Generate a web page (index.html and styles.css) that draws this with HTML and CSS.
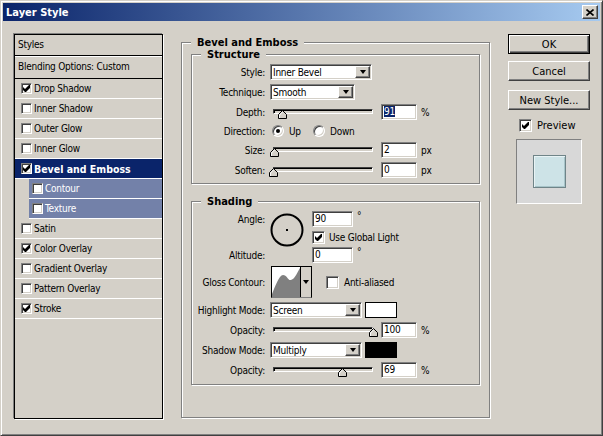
FILE: index.html
```html
<!DOCTYPE html>
<html lang="en">
<head>
  <meta charset="UTF-8" />
  <title>Layer Style</title>
  <link rel="stylesheet" href="styles.css">
</head>
<body>
  <div class="window">
    <div class="titlebar">
      <span class="title">Layer Style</span>
      <span class="close-btn"><svg width="8" height="7" viewBox="0 0 8 7"><path d="M0.5 0.5L7.5 6.5M7.5 0.5L0.5 6.5" stroke="#000" stroke-width="1.6"/></svg></span>
    </div>

    <div class="dialog">
      <!-- left: list of effects -->
      <div class="style-list">
        <div class="list-head">Styles</div>
        <div class="list-blend">Blending Options: Custom</div>
        <div class="list-item"><span class="check"><svg width="7" height="7" viewBox="0 0 7 7"><path d="M0 2L2 4L6 0H7V3L3 7H2L0 5Z"/></svg></span>Drop Shadow</div>
        <div class="list-item"><span class="check"></span>Inner Shadow</div>
        <div class="list-item"><span class="check"></span>Outer Glow</div>
        <div class="list-item"><span class="check"></span>Inner Glow</div>
        <div class="list-item selected"><span class="check"><svg width="7" height="7" viewBox="0 0 7 7"><path d="M0 2L2 4L6 0H7V3L3 7H2L0 5Z"/></svg></span>Bevel and Emboss</div>
        <div class="list-item sub"><span class="check"></span>Contour</div>
        <div class="list-item sub"><span class="check"></span>Texture</div>
        <div class="list-item"><span class="check"></span>Satin</div>
        <div class="list-item"><span class="check"><svg width="7" height="7" viewBox="0 0 7 7"><path d="M0 2L2 4L6 0H7V3L3 7H2L0 5Z"/></svg></span>Color Overlay</div>
        <div class="list-item"><span class="check"></span>Gradient Overlay</div>
        <div class="list-item"><span class="check"></span>Pattern Overlay</div>
        <div class="list-item"><span class="check"><svg width="7" height="7" viewBox="0 0 7 7"><path d="M0 2L2 4L6 0H7V3L3 7H2L0 5Z"/></svg></span>Stroke</div>
      </div>

      <!-- middle: bevel and emboss settings -->
      <fieldset class="group main-group">
        <legend class="outer-legend">Bevel and Emboss</legend>
        <div class="group-inner">

          <fieldset class="group structure">
            <legend>Structure</legend>
            <div class="rows">
              <div class="row">
                <span class="lbl">Style:</span>
                <div class="select style-select">Inner Bevel<span class="drop"><span class="arrow"></span></span></div>
              </div>
              <div class="row">
                <span class="lbl">Technique:</span>
                <div class="select technique-select">Smooth<span class="drop"><span class="arrow"></span></span></div>
              </div>
              <div class="row">
                <span class="lbl">Depth:</span>
                <div class="slider"><div class="track"></div><span class="thumb" style="left: 9%"><svg width="9" height="9" viewBox="0 0 9 9"><path d="M4.5 0.5L8.5 4.5V8.5H0.5V4.5Z" fill="#d4d0c8" stroke="#000"/><path d="M1.5 8V5L4.5 2" fill="none" stroke="#fff"/></svg></span></div>
                <div class="field"><span class="sel-text">91</span></div>
                <span class="unit">%</span>
              </div>
              <div class="row direction">
                <span class="lbl">Direction:</span>
                <span class="opt up"><span class="radio on"></span>Up</span>
                <span class="opt"><span class="radio"></span>Down</span>
              </div>
              <div class="row">
                <span class="lbl">Size:</span>
                <div class="slider"><div class="track"></div><span class="thumb" style="left: 1%"><svg width="9" height="9" viewBox="0 0 9 9"><path d="M4.5 0.5L8.5 4.5V8.5H0.5V4.5Z" fill="#d4d0c8" stroke="#000"/><path d="M1.5 8V5L4.5 2" fill="none" stroke="#fff"/></svg></span></div>
                <div class="field">2</div>
                <span class="unit">px</span>
              </div>
              <div class="row">
                <span class="lbl">Soften:</span>
                <div class="slider"><div class="track"></div><span class="thumb" style="left: 0%"><svg width="9" height="9" viewBox="0 0 9 9"><path d="M4.5 0.5L8.5 4.5V8.5H0.5V4.5Z" fill="#d4d0c8" stroke="#000"/><path d="M1.5 8V5L4.5 2" fill="none" stroke="#fff"/></svg></span></div>
                <div class="field">0</div>
                <span class="unit">px</span>
              </div>
            </div>
          </fieldset>

          <fieldset class="group shading">
            <legend>Shading</legend>
            <div class="rows">
              <div class="angle-block">
                <span class="lbl angle-lbl">Angle:</span>
                <svg class="dial" width="34" height="34" viewBox="0 0 34 34"><circle cx="17" cy="17" r="15.5" fill="none" stroke="#000" stroke-width="2"/><rect x="16" y="16" width="2" height="2"/></svg>
                <span class="angle-val"><span class="field wide">90</span><span class="deg">°</span></span>
                <span class="global-light"><span class="check big"><svg width="7" height="7" viewBox="0 0 7 7"><path d="M0 2L2 4L6 0H7V3L3 7H2L0 5Z"/></svg></span>Use Global Light</span>
                <span class="lbl altitude-lbl">Altitude:</span>
                <span class="altitude-val"><span class="field wide">0</span><span class="deg">°</span></span>
              </div>
              <div class="row contour-row">
                <span class="lbl">Gloss Contour:</span>
                <div class="contour">
                  <svg class="curve" width="28" height="30" viewBox="0 0 28 30"><path d="M0 30V27C3 20 7 8 11 8C15 8 16 14 19 13C23 12 26 4 28 1V30Z" fill="#808080"/></svg>
                  <span class="contour-drop"><span class="arrow"></span></span>
                </div>
                <span class="anti"><span class="check big"></span>Anti-aliased</span>
              </div>
              <div class="row">
                <span class="lbl">Highlight Mode:</span>
                <div class="select mode-select">Screen<span class="drop"><span class="arrow"></span></span></div>
                <span class="color-chip white"></span>
              </div>
              <div class="row">
                <span class="lbl">Opacity:</span>
                <div class="slider"><div class="track"></div><span class="thumb" style="left: 100%"><svg width="9" height="9" viewBox="0 0 9 9"><path d="M4.5 0.5L8.5 4.5V8.5H0.5V4.5Z" fill="#d4d0c8" stroke="#000"/><path d="M1.5 8V5L4.5 2" fill="none" stroke="#fff"/></svg></span></div>
                <div class="field">100</div>
                <span class="unit">%</span>
              </div>
              <div class="row">
                <span class="lbl">Shadow Mode:</span>
                <div class="select mode-select">Multiply<span class="drop"><span class="arrow"></span></span></div>
                <span class="color-chip black"></span>
              </div>
              <div class="row">
                <span class="lbl">Opacity:</span>
                <div class="slider"><div class="track"></div><span class="thumb" style="left: 69%"><svg width="9" height="9" viewBox="0 0 9 9"><path d="M4.5 0.5L8.5 4.5V8.5H0.5V4.5Z" fill="#d4d0c8" stroke="#000"/><path d="M1.5 8V5L4.5 2" fill="none" stroke="#fff"/></svg></span></div>
                <div class="field">69</div>
                <span class="unit">%</span>
              </div>
            </div>
          </fieldset>

        </div>
      </fieldset>

      <!-- right: buttons and preview -->
      <div class="side">
        <button class="btn default">OK</button>
        <button class="btn cancel">Cancel</button>
        <button class="btn new-style">New Style...</button>
        <label class="preview-check"><span class="check big"><svg width="7" height="7" viewBox="0 0 7 7"><path d="M0 2L2 4L6 0H7V3L3 7H2L0 5Z"/></svg></span>Preview</label>
        <div class="preview"><div class="preview-swatch"></div></div>
      </div>
    </div>
  </div>
</body>
</html>
```

FILE: styles.css
```css
* { box-sizing: border-box; }
body {
  margin: 0;
  background: #d4d0c8;
  font-family: "DejaVu Sans Condensed", "DejaVu Sans", sans-serif;
  font-size: 10px;
  letter-spacing: -0.25px;
  color: #000;
}

.window {
  width: 603px;
  height: 436px;
  padding: 2px;
  background: #d4d0c8;
  border: 1px solid;
  border-color: #d4d0c8 #404040 #404040 #d4d0c8;
  box-shadow: inset 1px 1px #fff, inset -1px -1px #808080;
}

.titlebar {
  height: 18px;
  display: flex;
  align-items: center;
  justify-content: space-between;
  padding: 0 2px 0 3px;
  background: linear-gradient(to right, #0a246a, #a6caf0);
}
.title { color: #fff; font-weight: bold; font-size: 11px; letter-spacing: 0; }
.close-btn {
  width: 16px;
  height: 14px;
  display: flex;
  align-items: center;
  justify-content: center;
  background: #d4d0c8;
  border: 1px solid;
  border-color: #fff #404040 #404040 #fff;
  box-shadow: inset -1px -1px #808080;
}

.dialog {
  display: flex;
  align-items: flex-start;
  padding: 13px 0 0 11px;
}

/* effects list */
.style-list {
  width: 149px;
  height: 385px;
  border: 1px solid #000;
  box-shadow: -1px -1px #808080, 1px 1px #fff;
}
.list-head {
  height: 21px;
  line-height: 20px;
  padding-left: 3px;
  border-bottom: 1px solid #000;
}
.list-blend {
  height: 23px;
  line-height: 20px;
  padding-left: 3px;
  border-top: 1px solid #fff;
  border-bottom: 1px solid #000;
}
.list-item {
  height: 20px;
  display: flex;
  align-items: center;
  padding-left: 6px;
  border-bottom: 1px solid #fff;
}
.list-item .check { margin-right: 2px; }
.list-item.selected {
  background: #0a246a;
  color: #fff;
  font-weight: bold;
  font-size: 10.5px;
  letter-spacing: 0;
}
.list-item.sub {
  margin-left: 14px;
  padding-left: 3px;
  background: #7381a9;
  color: #fff;
}

.check {
  width: 11px;
  height: 11px;
  flex: none;
  display: inline-flex;
  align-items: center;
  justify-content: center;
  background: #fff;
  border: 1px solid;
  border-color: #808080 #fff #fff #808080;
  box-shadow: inset 1px 1px #404040, inset -1px -1px #d4d0c8;
}
.check.big { width: 13px; height: 13px; }
.check svg { fill: #000; }

/* group boxes */
.group {
  margin: 0;
  padding: 0;
  min-width: 0;
  border: 1px solid #808080;
  box-shadow: inset 1px 1px #fff, 1px 1px #fff;
}
.group legend {
  margin-left: 9px;
  padding: 0 6px;
  line-height: 13px;
  font-size: 11px;
  font-weight: bold;
  letter-spacing: 0;
  background: #d4d0c8;
}
.group legend.outer-legend { line-height: 11px; }

.main-group {
  width: 309px;
  height: 381px;
  margin: 3px 0 0 18px;
}
.group-inner { padding: 0 9px; }
.structure { height: 136px; }
.shading { height: 190px; margin-top: 11px; }

.rows { padding-top: 3px; }
.row {
  height: 16px;
  display: flex;
  align-items: center;
  margin-bottom: 4px;
}
.lbl {
  width: 78px;
  flex: none;
  display: flex;
  justify-content: flex-end;
  padding-right: 5px;
  white-space: nowrap;
}

.select {
  height: 16px;
  display: flex;
  align-items: center;
  padding: 0 1px 0 2px;
  background: #fff;
  border: 1px solid;
  border-color: #808080 #fff #fff #808080;
  box-shadow: inset 1px 1px #404040, inset -1px -1px #d4d0c8;
}
.style-select { width: 102px; }
.technique-select { width: 85px; }
.mode-select { width: 92px; }
.drop {
  margin-left: auto;
  width: 15px;
  height: 12px;
  display: flex;
  align-items: center;
  justify-content: center;
  background: #d4d0c8;
  border: 1px solid;
  border-color: #fff #404040 #404040 #fff;
  box-shadow: inset -1px -1px #808080;
}
.arrow {
  width: 0;
  height: 0;
  border-left: 3.5px solid transparent;
  border-right: 3.5px solid transparent;
  border-top: 4px solid #000;
}

.slider {
  position: relative;
  width: 100px;
  height: 16px;
  margin-left: 3px;
}
.track {
  margin-top: 5px;
  height: 5px;
  background: #d4d0c8;
  border: 1px solid;
  border-color: #404040 #fff #fff #404040;
  box-shadow: inset 1px 1px #000;
}
.thumb {
  position: absolute;
  top: 6px;
  width: 9px;
  height: 9px;
  margin-left: -4px;
  display: flex;
}

.field {
  width: 36px;
  height: 16px;
  margin-left: 8px;
  padding-left: 2px;
  line-height: 14px;
  background: #fff;
  border: 1px solid;
  border-color: #808080 #fff #fff #808080;
  box-shadow: inset 1px 1px #404040, inset -1px -1px #d4d0c8;
}
.field.wide { width: 41px; margin-left: 0; display: block; }
.sel-text { background: #0a246a; color: #fff; }
.unit { margin-left: 4px; }

.direction { height: 14px; margin-bottom: 4px; }
.opt { display: flex; align-items: center; }
.opt.up { width: 41px; margin-left: 2px; }
.radio {
  width: 12px;
  height: 12px;
  margin-right: 5px;
  border-radius: 50%;
  display: flex;
  align-items: center;
  justify-content: center;
  background: #fff;
  border: 1px solid;
  border-color: #808080 #fff #fff #808080;
  box-shadow: inset 1px 1px #404040, inset -1px -1px #d4d0c8;
}
.radio.on::after {
  content: "";
  width: 4px;
  height: 4px;
  border-radius: 50%;
  background: #000;
}

/* angle and altitude */
.angle-block {
  display: grid;
  grid-template-columns: 78px 42px auto;
  grid-template-rows: 16px 20px 16px;
  align-items: center;
}
.angle-lbl { grid-row: 1; grid-column: 1; }
.altitude-lbl { grid-row: 3; grid-column: 1; }
.dial { grid-row: 1 / 4; grid-column: 2; align-self: start; margin-top: 2px; }
.angle-val, .altitude-val { display: flex; align-items: flex-start; grid-column: 3; }
.angle-val { grid-row: 1; }
.altitude-val { grid-row: 3; }
.deg { margin-left: 4px; line-height: 9px; }
.global-light { grid-row: 2; grid-column: 3; display: flex; align-items: center; }
.global-light .check { margin-right: 4px; }

.contour-row { height: 32px; margin-top: 3px; }
.contour {
  width: 41px;
  height: 32px;
  margin-left: 1px;
  display: flex;
  background: #fff;
  border: 1px solid;
  border-color: #000 #000 #808080 #000;
}
.curve { display: block; margin-top: auto; }
.contour-drop {
  width: 11px;
  display: flex;
  align-items: center;
  justify-content: center;
  background: #d4d0c8;
  border-left: 1px solid #000;
}
.anti { display: flex; align-items: center; margin-left: 14px; }
.anti .check { margin-right: 5px; }

.color-chip {
  width: 32px;
  height: 16px;
  margin-left: 3px;
  border: 1px solid #000;
}
.color-chip.white { background: #fff; }
.color-chip.black { background: #000; }

/* buttons and preview */
.side {
  width: 82px;
  margin-left: 18px;
  display: flex;
  flex-direction: column;
  font-size: 11px;
  letter-spacing: 0;
}
.btn {
  width: 82px;
  height: 20px;
  padding: 0;
  font: inherit;
  color: #000;
  background: #d4d0c8;
  border: 1px solid;
  border-color: #fff #404040 #404040 #fff;
  box-shadow: inset -1px -1px #808080;
}
.btn.default {
  border: 1px solid #000;
  box-shadow: inset 1px 1px #fff, inset -1px -1px #404040, inset -2px -2px #808080;
}
.btn.cancel { margin-top: 7px; }
.btn.new-style { margin-top: 9px; }
.preview-check {
  display: flex;
  align-items: center;
  height: 13px;
  margin: 9px 0 0 11px;
}
.preview-check .check { margin-right: 5px; }
.preview {
  width: 66px;
  height: 65px;
  margin: 7px 0 0 8px;
  display: flex;
  align-items: center;
  justify-content: center;
  background: #d8d8d8;
  border: 1px solid;
  border-color: #808080 #fff #fff #808080;
}
.preview-swatch {
  width: 33px;
  height: 33px;
  background: #cde3e7;
  border: 1px solid #6f8488;
  box-shadow: inset 1px 1px #e8f3f5, inset -1px -1px #a7c4c9;
}
```
